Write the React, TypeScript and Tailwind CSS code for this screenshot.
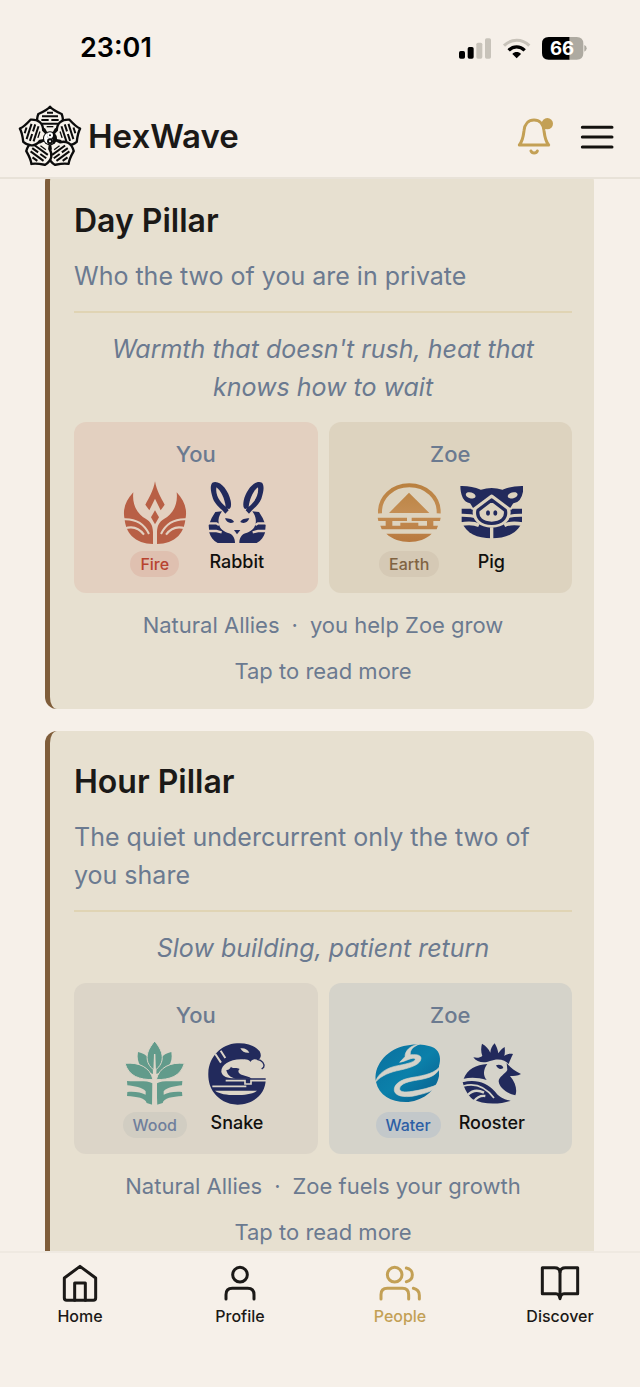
// src/App.tsx
import React from 'react';

interface IconProps {
  bg: string;
}

interface Person {
  name: string;
  tile: string;
  bg: string;
  element: string;
  pill: string;
  animal: string;
  ElementIcon: React.FC<IconProps>;
  AnimalIcon: React.FC<IconProps>;
}

interface Pillar {
  title: string;
  subtitle: string;
  quote: string;
  relation: string;
  detail: string;
  people: Person[];
}

const NAVY = '#222a5c';

const FireIcon: React.FC<IconProps> = ({ bg }) => {
  const half = (
    <>
      <path
        fill="#b85f45"
        d="M67 67C44 92 34 118 41 148C42 165 50 186 62 198C78 214 100 222 126 222V186C125 166 120 156 104 146C84 136 62 110 67 67Z"
      />
      <path d="M36 148C70 146 98 158 114 192" stroke={bg} strokeWidth="6" fill="none" />
      <path d="M40 176C62 168 84 174 99 194" stroke={bg} strokeWidth="6" fill="none" />
    </>
  );
  return (
    <svg className="size-16" viewBox="36 33 192 192" aria-hidden="true">
      {half}
      <g transform="translate(264 0) scale(-1 1)">{half}</g>
      <path
        fill="#b85f45"
        d="M132 34C127 62 114 84 103 104L115 121L132 86L149 121L161 104C150 84 137 62 132 34Z"
      />
      <path fill="#b85f45" d="M132 121L144 142L132 163L120 142Z" />
    </svg>
  );
};

const RabbitIcon: React.FC<IconProps> = ({ bg }) => {
  const half = (
    <>
      <path
        fill={NAVY}
        d="M306 38C328 28 354 60 361 92C364 108 361 116 355 117L351 115L355 121L345 131C334 116 317 108 308 86C300 64 299 46 306 38Z"
      />
      <path fill={bg} d="M318 52C332 62 343 86 346 110C328 96 315 76 318 52Z" />
      <path
        fill={NAVY}
        d="M315 126L335 124C326 136 323 148 325 160C328 178 342 186 356 190C367 194 374 204 374 219H322C308 211 301 201 297 188L295 166L304 144Z"
      />
      <path d="M288 160H318L326 165M288 183H318L334 187" stroke={bg} strokeWidth="7" fill="none" />
      <path fill={NAVY} d="M344 145C356 145 368 148 371 156C360 162 349 158 344 145Z" />
    </>
  );
  return (
    <svg className="size-16" viewBox="284 33 192 192" aria-hidden="true">
      {half}
      <g transform="translate(761 0) scale(-1 1)">{half}</g>
      <path fill={NAVY} d="M371 180H390L380 193Z" />
    </svg>
  );
};

const EarthIcon: React.FC<IconProps> = () => (
  <svg className="size-16" viewBox="36 33 192 192" aria-hidden="true">
    <defs>
      <linearGradient id="earth" x1="0" y1="40" x2="0" y2="216" gradientUnits="userSpaceOnUse">
        <stop offset="0" stopColor="#b9803f" />
        <stop offset="0.5" stopColor="#c48e54" />
        <stop offset="1" stopColor="#b8793f" />
      </linearGradient>
    </defs>
    <path d="M45 130C43 82 82 46 133 46C183 46 223 82 221 130" stroke="url(#earth)" strokeWidth="12" fill="none" />
    <g fill="url(#earth)">
      <path d="M132 68L193 129H72Z" />
      <path d="M38 143H126V153H82V167H106V158H160V167H186V153H140V143H227L225 153H205V167H219L215 178H50L46 167H62V153H40Z" />
      <path d="M64 191H200C168 224 98 224 64 191Z" />
    </g>
  </svg>
);

const PigIcon: React.FC<IconProps> = ({ bg }) => (
  <svg className="size-16" viewBox="282 33 192 192" aria-hidden="true">
    <path fill={NAVY} d="M290 116H471V156C458 190 424 205 380 205C336 205 304 190 290 156Z" />
    <path d="M284 136C310 135 326 138 340 142M476 136C450 135 434 138 420 142" stroke={bg} strokeWidth="9" fill="none" />
    <path d="M284 163C312 158 326 158 342 166M476 163C448 158 434 158 418 166" stroke={bg} strokeWidth="11" fill="none" />
    <path
      fill={NAVY}
      stroke={bg}
      strokeWidth="6"
      d="M283 45C308 44 330 48 347 56C368 50 392 50 413 56C430 48 452 44 479 45C478 78 470 100 446 103L438 116H322L314 103C292 98 283 78 283 45Z"
    />
    <ellipse cx="317" cy="76" rx="15" ry="9" fill={bg} transform="rotate(15 317 76)" />
    <ellipse cx="443" cy="76" rx="15" ry="9" fill={bg} transform="rotate(-15 443 76)" />
    <path
      d="M380 82L428 118C434 146 412 165 380 165C348 165 326 146 332 118Z"
      fill={bg}
      stroke={bg}
      strokeWidth="16"
      strokeLinejoin="round"
    />
    <path
      d="M380 90L421 121C426 145 408 160 380 160C352 160 334 145 339 121Z"
      fill={bg}
      stroke={NAVY}
      strokeWidth="10"
      strokeLinejoin="round"
    />
    <ellipse cx="369" cy="129" rx="6" ry="8" fill={NAVY} />
    <ellipse cx="391" cy="129" rx="6" ry="8" fill={NAVY} />
    <path d="M380 172V208" stroke={bg} strokeWidth="10" />
  </svg>
);

const WoodIcon: React.FC<IconProps> = ({ bg }) => {
  const half = (
    <>
      <path fill="#629b8b" d="M83 66C110 71 129 92 128 132C96 120 77 102 83 66Z" />
      <path fill="#629b8b" stroke={bg} strokeWidth="3" d="M44 100C86 96 120 112 128 149C88 149 56 140 44 100Z" />
      <path fill="#629b8b" stroke={bg} strokeWidth="3" d="M134 32C112 58 106 78 113 98C118 110 126 116 134 124" />
      <path
        fill="#629b8b"
        d="M50 153C80 155 112 150 126 160V224L109 219C106 204 80 200 50 198L51 186C76 184 92 188 106 194V184C96 172 72 168 51 166Z"
      />
    </>
  );
  return (
    <svg className="size-16" viewBox="38 36 192 192" aria-hidden="true">
      {half}
      <g transform="translate(266 0) scale(-1 1)">{half}</g>
      <path fill={bg} d="M131 72H135L141 228H125Z" />
    </svg>
  );
};

const SnakeIcon: React.FC<IconProps> = ({ bg }) => (
  <svg className="size-16" viewBox="284 36 192 192" aria-hidden="true">
    <path
      fill={NAVY}
      d="M380 40C412 38 438 50 448 64C454 76 452 84 443 90C434 86 426 86 420 96C418 90 410 88 392 88C356 88 332 106 333 126C336 140 352 145 372 145H466C468 190 430 224 382 224C350 224 326 208 312 190C298 172 293 150 294 128C296 82 332 42 380 40Z"
    />
    <path fill={NAVY} d="M348 120C355 121 359 116 362 110C368 118 376 110 388 117C381 123 384 131 396 135C406 139 416 139 424 146H376C358 142 350 132 348 120Z" />
    <path d="M440 88C456 90 464 102 460 112L454 117" stroke={NAVY} strokeWidth="4" fill="none" />
    <path d="M315 72L332 98M331 62L345 84" stroke={bg} strokeWidth="6" />
    <path fill={bg} d="M390 55C402 53 412 58 417 68C406 70 396 66 390 55Z" />
    <path d="M346 152H404V162H422V152H470M306 169H408" stroke={bg} strokeWidth="5" fill="none" />
    <path fill={bg} d="M314 182H440C428 192 404 195 376 195C348 195 328 192 314 182Z" />
  </svg>
);

const WaterIcon: React.FC<IconProps> = ({ bg }) => (
  <svg className="size-16 overflow-visible" viewBox="33 36 192 192" aria-hidden="true">
    <defs>
      <linearGradient id="water" x1="0" y1="0" x2="1" y2="1">
        <stop offset="0" stopColor="#0a6f9e" />
        <stop offset="0.5" stopColor="#0b80aa" />
        <stop offset="1" stopColor="#095c8c" />
      </linearGradient>
    </defs>
    <path
      fill="url(#water)"
      d="M33 156C24 112 60 62 116 48C146 40 188 42 208 54C226 66 228 88 222 108L222 138C214 184 168 216 122 216C78 216 42 196 33 156Z"
    />
    <g fill={bg} stroke={bg} strokeWidth="2">
      <path d="M164 42C136 46 120 62 120 80L104 97C122 94 144 80 150 86C156 94 126 102 98 107C62 114 40 130 30 158C48 136 76 126 106 120C142 112 168 102 168 84C166 72 148 74 136 74C134 60 144 50 164 42Z" />
      <path d="M228 104C214 130 178 136 144 142C104 148 86 164 88 182C92 202 130 204 162 194C192 188 212 178 226 160C196 174 168 180 142 184C118 188 102 186 104 174C108 160 132 154 158 150C194 144 220 136 228 104Z" />
    </g>
  </svg>
);

const RoosterIcon: React.FC<IconProps> = ({ bg }) => (
  <svg className="size-16" viewBox="284 36 192 192" aria-hidden="true">
    <g fill={NAVY}>
      <path d="M324 82C334 84 344 84 351 78C346 64 347 52 350 41C362 48 370 56 375 68C376 56 380 48 388 40C394 50 397 58 399 70C404 62 410 56 418 51C419 62 419 70 417 78C424 72 434 70 443 72C437 84 434 92 430 102C420 88 396 84 374 93C358 100 334 98 324 82Z" />
      <path d="M295 146C306 118 332 104 366 102C354 118 352 136 364 150C340 142 314 142 295 146Z" />
      <path d="M424 98C432 110 446 122 467 132C456 138 446 138 434 138C452 158 456 182 450 196C424 190 402 174 400 154C400 140 420 132 426 120Z" />
      <path d="M392 106C402 102 412 106 414 114C406 120 398 118 392 106Z" />
      <path d="M292 157C330 146 366 158 388 184C400 200 412 208 436 212C404 224 352 224 322 208C306 194 298 178 292 157Z" />
    </g>
    <path d="M294 168C330 158 360 170 386 204" stroke={bg} strokeWidth="5" fill="none" />
    <path d="M308 194C322 180 340 180 356 188M326 214C336 200 346 196 360 198" stroke={bg} strokeWidth="7" fill="none" />
  </svg>
);

const Logo = () => (
  <svg className="size-16" viewBox="24 18 192 192" aria-hidden="true">
    <g transform="translate(120 118)">
      {[0, 72, 144, 216, 288].map((angle) => (
        <g key={angle} transform={`rotate(${angle})`}>
          <path
            d="M0 -95C10 -84 24 -78 35 -73C44 -50 36 -34 17 -27L9 -12H-9L-17 -27C-36 -34 -44 -50 -35 -73C-24 -78 -10 -84 0 -95Z"
            fill="#f7f3ec"
            stroke="#0c0c0c"
            strokeWidth="7"
            strokeLinejoin="round"
          />
          <path d="M-9 -77H9M-24 -66H24M-26 -55H-4M4 -55H26M-24 -44H24" stroke="#0c0c0c" strokeWidth="6" />
          <path d="M-10 -35H10" stroke="#0c0c0c" strokeWidth="4" />
        </g>
      ))}
      <circle r="21" fill="#0c0c0c" />
      <path d="M0 -18A18 18 0 0 0 0 18A9 9 0 0 0 0 0A9 9 0 0 1 0 -18Z" fill="#fff" />
      <circle cy="-9" r="9" fill="#fff" />
      <circle cy="9" r="9" fill="#0c0c0c" />
      <circle cy="-9" r="3" fill="#0c0c0c" />
      <circle cy="9" r="3" fill="#fff" />
    </g>
  </svg>
);

const StatusIcons = () => (
  <svg className="h-[26px] w-[130px]" viewBox="54 42 390 78" aria-hidden="true">
    <rect x="57" y="90" width="18" height="23" rx="5" fill="#000" />
    <rect x="83" y="78" width="18" height="35" rx="5" fill="#000" />
    <rect x="109" y="65" width="18" height="48" rx="5" fill="#c8c3ba" />
    <rect x="135" y="52" width="18" height="61" rx="5" fill="#c8c3ba" />
    <path d="M192 74C214 52 246 52 268 74" stroke="#c8c3ba" strokeWidth="9" fill="none" />
    <path d="M206 88C220 74 240 74 254 88" stroke="#000" strokeWidth="10" fill="none" />
    <path d="M217 99C224 91 236 91 243 99L230 112Z" fill="#000" />
    <path d="M326 48H389V116H326Q306 116 306 96V68Q306 48 326 48Z" fill="#000" />
    <path d="M389 48H410Q430 48 430 68V96Q430 116 410 116H389Z" fill="#aeaaa1" />
    <path d="M433 72Q440 75 440 82T433 92Z" fill="#aeaaa1" />
    <text x="366" y="102" textAnchor="middle" fontSize="56" fontWeight="700" fill="#fff">66</text>
  </svg>
);

const pillars: Pillar[] = [
  {
    title: 'Day Pillar',
    subtitle: 'Who the two of you are in private',
    quote: "Warmth that doesn't rush, heat that knows how to wait",
    relation: 'Natural Allies',
    detail: 'you help Zoe grow',
    people: [
      {
        name: 'You',
        tile: 'bg-[#e3d0c0]',
        bg: '#e3d0c0',
        element: 'Fire',
        pill: 'bg-[#dfc0b0] text-[#b8432f]',
        animal: 'Rabbit',
        ElementIcon: FireIcon,
        AnimalIcon: RabbitIcon,
      },
      {
        name: 'Zoe',
        tile: 'bg-[#ddd3bf]',
        bg: '#ddd3bf',
        element: 'Earth',
        pill: 'bg-[#d5c9b5] text-[#806342]',
        animal: 'Pig',
        ElementIcon: EarthIcon,
        AnimalIcon: PigIcon,
      },
    ],
  },
  {
    title: 'Hour Pillar',
    subtitle: 'The quiet undercurrent only the two of you share',
    quote: 'Slow building, patient return',
    relation: 'Natural Allies',
    detail: 'Zoe fuels your growth',
    people: [
      {
        name: 'You',
        tile: 'bg-[#dcd5c8]',
        bg: '#dcd5c8',
        element: 'Wood',
        pill: 'bg-[#d1cdc2] text-[#6f7f9c]',
        animal: 'Snake',
        ElementIcon: WoodIcon,
        AnimalIcon: SnakeIcon,
      },
      {
        name: 'Zoe',
        tile: 'bg-[#d5d3ca]',
        bg: '#d5d3ca',
        element: 'Water',
        pill: 'bg-[#c3c8ca] text-[#2d5fa5]',
        animal: 'Rooster',
        ElementIcon: WaterIcon,
        AnimalIcon: RoosterIcon,
      },
    ],
  },
];

const PersonTile: React.FC<{ person: Person }> = ({ person }) => {
  const { name, tile, bg, element, pill, animal, ElementIcon, AnimalIcon } = person;

  return (
    <div className={`flex flex-col items-center rounded-xl pt-4 pb-4 ${tile}`}>
      <div className="text-[22px] leading-8 font-medium text-[#6b7a90]">{name}</div>
      <div className="mt-[11px] flex justify-center gap-[18px]">
        <div className="flex min-w-16 flex-col items-center gap-[6px]">
          <ElementIcon bg={bg} />
          <span className={`rounded-full px-[10px] text-base leading-[26px] font-medium ${pill}`}>{element}</span>
        </div>
        <div className="flex min-w-16 flex-col items-center gap-1">
          <AnimalIcon bg={bg} />
          <span className="text-[18px] leading-[26px] font-medium text-[#11100e]">{animal}</span>
        </div>
      </div>
    </div>
  );
};

const PillarCard: React.FC<{ pillar: Pillar }> = ({ pillar }) => (
  <article className="rounded-xl border-l-[5px] border-[#7f5d3a] bg-[#e7e0d0] pt-[31px] pr-[22px] pb-5 pl-6">
    <h2 className="text-[32px] leading-10 font-semibold text-[#1b1917]">{pillar.title}</h2>
    <p className="mt-4 border-b-2 border-[#e0d4b4] pb-4 text-[25px] leading-[38px] text-[#6b7a90]">
      {pillar.subtitle}
    </p>
    <p className="mt-[17px] px-4 text-center text-[25px] leading-[38px] text-[#6b7a90] italic">{pillar.quote}</p>
    <div className="mt-4 grid grid-cols-2 gap-[11px]">
      {pillar.people.map((person) => (
        <PersonTile key={person.name} person={person} />
      ))}
    </div>
    <p className="mt-[14px] flex justify-center gap-3 text-[22px] leading-9 text-[#6b7a90]">
      <span>{pillar.relation}</span>
      <span>·</span>
      <span>{pillar.detail}</span>
    </p>
    <button type="button" className="mt-[10px] block w-full text-center text-[22px] leading-9 text-[#6b7a90]">
      Tap to read more
    </button>
  </article>
);

const navItems = [
  {
    label: 'Home',
    active: false,
    viewBox: '93 72 114 114',
    paths: ['M103 114L150 79L197 114V174Q197 181 190 181H110Q103 181 103 174Z', 'M134 181V129H166V181'],
  },
  {
    label: 'Profile',
    active: false,
    viewBox: '574 72 114 114',
    paths: ['M653 104A22 22 0 1 1 609 104A22 22 0 1 1 653 104Z', 'M589 177V164Q589 145 608 145H654Q673 145 673 164V177'],
  },
  {
    label: 'People',
    active: true,
    viewBox: '124 72 114 114',
    paths: [
      'M187 104A22 22 0 1 1 143 104A22 22 0 1 1 187 104Z',
      'M124 177V164Q124 145 143 145H188Q207 145 207 164V177',
      'M200 84C224 88 224 120 200 125',
      'M221 145Q239 149 239 166V177',
    ],
  },
  {
    label: 'Discover',
    active: false,
    viewBox: '603 72 114 114',
    paths: ['M660 96Q658 83 644 83H607V161H648Q658 161 660 176Q662 161 672 161H713V83H676Q662 83 660 96Z', 'M660 96V172'],
  },
];

export default function App() {
  return (
    <div className="flex h-screen flex-col overflow-hidden bg-[#f6f0e9] font-['Inter',sans-serif]">
      <header className="shrink-0 border-b-2 border-[#e8e2d8]">
        <div className="flex h-24 items-center justify-between pr-[52px] pl-20">
          <time className="text-[27px] font-semibold text-black">23:01</time>
          <StatusIcons />
        </div>
        <div className="flex h-[81px] items-center justify-between pr-6 pl-[18px]">
          <a href="#" className="flex items-center gap-[6px]">
            <Logo />
            <span className="text-[33px] font-semibold text-[#1b1917]">HexWave</span>
          </a>
          <div className="flex items-center gap-[22px]">
            <button type="button" aria-label="Notifications">
              <svg className="size-10" viewBox="228 291 120 120" fill="none" aria-hidden="true">
                <path
                  d="M238 375C249 362 250 348 252 332C254 312 266 300 282 300C298 300 310 312 312 332C314 348 315 362 326 375Z"
                  stroke="#c3a055"
                  strokeWidth="9"
                  strokeLinejoin="round"
                />
                <path d="M273 393C276 401 289 401 292 393" stroke="#c3a055" strokeWidth="9" strokeLinecap="round" />
                <circle cx="322" cy="311" r="17" fill="#c3a055" />
              </svg>
            </button>
            <button type="button" aria-label="Menu">
              <svg className="h-10 w-[38px]" viewBox="414 290 114 120" aria-hidden="true">
                <path d="M427 321H516M427 350H516M427 380H516" stroke="#14120f" strokeWidth="9" strokeLinecap="round" />
              </svg>
            </button>
          </div>
        </div>
      </header>

      <main className="min-h-0 flex-1 overflow-hidden pr-[46px] pl-[45px]">
        {/* the list is scrolled a little way under the header */}
        <div className="-mt-[9px] flex flex-col gap-[22px]">
          {pillars.map((pillar) => (
            <PillarCard key={pillar.title} pillar={pillar} />
          ))}
        </div>
      </main>

      <nav className="grid h-[136px] shrink-0 grid-cols-4 border-t-2 border-[#efe9e1] pt-[11px]">
        {navItems.map((item) => (
          <a
            key={item.label}
            href="#"
            className={`flex flex-col items-center gap-[2px] ${item.active ? 'text-[#c3a055]' : 'text-[#1b1917]'}`}
          >
            <svg
              className="size-[38px] overflow-visible"
              viewBox={item.viewBox}
              fill="none"
              stroke="currentColor"
              strokeWidth="9"
              strokeLinecap="round"
              strokeLinejoin="round"
              aria-hidden="true"
            >
              {item.paths.map((d) => (
                <path key={d} d={d} />
              ))}
            </svg>
            <span className="text-base leading-6 font-medium">{item.label}</span>
          </a>
        ))}
      </nav>
    </div>
  );
}
